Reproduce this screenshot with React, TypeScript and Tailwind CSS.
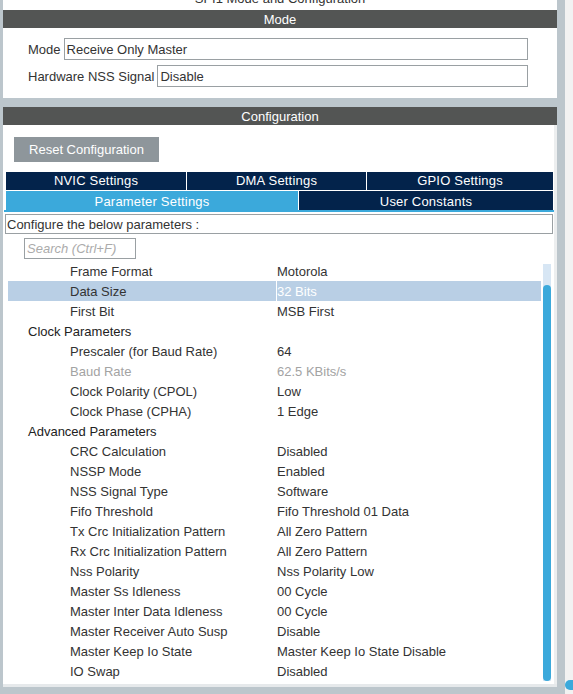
import React from "react";

type Row =
    | { kind: "group"; label: string }
    | { kind: "item"; label: string; value: string; selected?: boolean; disabled?: boolean };

const rows: Row[] = [
    { kind: "item", label: "Frame Format", value: "Motorola" },
    { kind: "item", label: "Data Size", value: "32 Bits", selected: true },
    { kind: "item", label: "First Bit", value: "MSB First" },
    { kind: "group", label: "Clock Parameters" },
    { kind: "item", label: "Prescaler (for Baud Rate)", value: "64" },
    { kind: "item", label: "Baud Rate", value: "62.5 KBits/s", disabled: true },
    { kind: "item", label: "Clock Polarity (CPOL)", value: "Low" },
    { kind: "item", label: "Clock Phase (CPHA)", value: "1 Edge" },
    { kind: "group", label: "Advanced Parameters" },
    { kind: "item", label: "CRC Calculation", value: "Disabled" },
    { kind: "item", label: "NSSP Mode", value: "Enabled" },
    { kind: "item", label: "NSS Signal Type", value: "Software" },
    { kind: "item", label: "Fifo Threshold", value: "Fifo Threshold 01 Data" },
    { kind: "item", label: "Tx Crc Initialization Pattern", value: "All Zero Pattern" },
    { kind: "item", label: "Rx Crc Initialization Pattern", value: "All Zero Pattern" },
    { kind: "item", label: "Nss Polarity", value: "Nss Polarity Low" },
    { kind: "item", label: "Master Ss Idleness", value: "00 Cycle" },
    { kind: "item", label: "Master Inter Data Idleness", value: "00 Cycle" },
    { kind: "item", label: "Master Receiver Auto Susp", value: "Disable" },
    { kind: "item", label: "Master Keep Io State", value: "Master Keep Io State Disable" },
    { kind: "item", label: "IO Swap", value: "Disabled" },
];

function SectionHeader({ title }: { title: string }) {
    return (
        <div className="h-[18px] bg-[#535554] pt-px text-white text-[13px] leading-[17px] text-center">
            {title}
        </div>
    );
}

function ModeField({ label, value }: { label: string; value: string }) {
    return (
        <div className="flex items-center h-[22px]">
            <span className="mr-[3px] pt-px text-[13px] text-[#333]">{label}</span>
            <div className="flex-1 h-[22px] border border-[#9aa0a3] pl-[2px] pt-px text-[13px] leading-[19px] text-[#333]">
                {value}
            </div>
        </div>
    );
}

function ParamRow({ row }: { row: Row }) {
    if (row.kind === "group") {
        return (
            <div className="h-[20px] pl-[20px] pt-px text-[13px] leading-[19px] text-[#222]">{row.label}</div>
        );
    }
    const labelColor = row.disabled ? "text-[#a3a3a3]" : "text-[#333]";
    const valueColor = row.selected ? "text-white" : row.disabled ? "text-[#a3a3a3]" : "text-[#333]";
    return (
        <div className={`flex h-[20px] pt-px text-[13px] leading-[19px] ${row.selected ? "bg-[#b9cfe5]" : ""}`}>
            <div className={`w-[268px] pl-[62px] ${labelColor}`}>{row.label}</div>
            <div className={`-mt-px w-px ${row.selected ? "bg-white" : ""}`} />
            <div className={valueColor}>{row.value}</div>
        </div>
    );
}

export default function App() {
    return (
        <div
            className="flex h-[694px] w-[573px] overflow-hidden bg-[#bcc6cc]"
            style={{ fontFamily: '"Liberation Sans", Arial, sans-serif' }}
        >
            <div className="w-[3px]" />

            {/* Main column */}
            <div className="flex flex-col w-[554px]">
                {/* Title, scrolled mostly out of view */}
                <div className="h-[10px] overflow-hidden bg-white">
                    <div className="-mt-[9px] text-center text-[13px] leading-[16px] text-[#333]">
                        SPI1 Mode and Configuration
                    </div>
                </div>

                {/* Mode */}
                <SectionHeader title="Mode" />
                <div className="flex flex-col gap-[5px] bg-white pt-[10px] pb-[11px] pl-[25px] pr-[29px]">
                    <ModeField label="Mode" value="Receive Only Master" />
                    <ModeField label="Hardware NSS Signal" value="Disable" />
                </div>

                <div className="h-[9px]" />

                {/* Configuration */}
                <SectionHeader title="Configuration" />
                <div className="flex flex-1 bg-white">
                    <div className="flex flex-col flex-1">
                        <div className="pt-[12px] pl-[11px]">
                            <button className="h-[25px] w-[145px] bg-[#8e969b] pt-px text-white text-[13px]">
                                Reset Configuration
                            </button>
                        </div>

                        {/* Tabs */}
                        <div className="mt-[9px] ml-[1px] border-b-2 border-[#3ba9db] pl-[2px] pr-[1px]">
                            <div className="flex h-[19px] gap-px pt-px text-[13px] leading-[18px] tracking-[0.2px] text-white">
                                <div className="w-[180px] bg-[#03234b] text-center">NVIC Settings</div>
                                <div className="w-[179px] bg-[#03234b] text-center">DMA Settings</div>
                                <div className="flex-1 bg-[#03234b] text-center">GPIO Settings</div>
                            </div>
                            <div className="flex h-[20px] gap-px pt-px text-[13px] leading-[19px] tracking-[0.2px] text-white">
                                <div className="w-[292px] bg-[#3ba9db] pt-px text-center">Parameter Settings</div>
                                <div className="flex-1 bg-[#03234b] pt-px text-center">User Constants</div>
                            </div>
                        </div>

                        <div className="mt-[2px] ml-[2px] mr-px h-[20px] border border-[#9aa0a3] pl-[1px] pt-px text-[13px] leading-[17px] text-[#333]">
                            Configure the below parameters :
                        </div>

                        <div className="mt-[4px] ml-[21px] h-[21px] w-[112px] border border-[#9aa0a3] pl-[2px] pt-px text-[13px] italic leading-[18px] text-[#ababab]">
                            Search (Ctrl+F)
                        </div>

                        {/* Parameter list */}
                        <div className="mt-[2px] flex pl-[5px]">
                            <div className="w-[533px]">
                                {rows.map((row) => (
                                    <ParamRow key={row.label} row={row} />
                                ))}
                            </div>
                            <div className="ml-[2px] mt-[3px] flex w-[8px] flex-col bg-[#d7e6f4]">
                                <div className="mt-[21px] flex-1 rounded-full bg-[#3ba9db]" />
                            </div>
                        </div>
                    </div>
                    <div className="w-[3px] bg-[#eceeef]" />
                </div>
                <div className="h-[3px] bg-[#e6e9eb]" />
                <div className="h-[7px]" />
            </div>

            <div className="w-[8px]" />

            {/* Outer scrollbar */}
            <div className="flex flex-1 flex-col bg-[#f2f2f2]">
                <div className="flex-1" />
                <div className="mb-[4px] h-[10px] rounded-l-full bg-[#3ba9db]" />
            </div>
        </div>
    );
}
